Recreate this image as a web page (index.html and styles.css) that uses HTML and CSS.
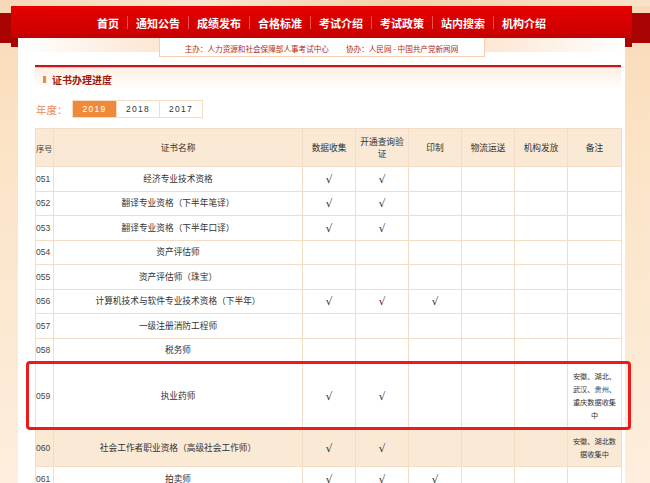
FILE: index.html
```html
<!DOCTYPE html>
<html lang="zh-CN">
<head>
<meta charset="utf-8">
<title>证书办理进度</title>
<link rel="stylesheet" href="styles.css">
</head>
<body>
<div class="topstrip"></div>
<div class="navrow">
  <nav class="nav">
    <a class="nav-item">首页</a><span class="sep"></span>
    <a class="nav-item">通知公告</a><span class="sep"></span>
    <a class="nav-item">成绩发布</a><span class="sep"></span>
    <a class="nav-item">合格标准</a><span class="sep"></span>
    <a class="nav-item">考试介绍</a><span class="sep"></span>
    <a class="nav-item">考试政策</a><span class="sep"></span>
    <a class="nav-item">站内搜索</a><span class="sep"></span>
    <a class="nav-item">机构介绍</a>
  </nav>
</div>
<div class="main">
  <div class="side side-l"></div>
  <div class="panel">
    <div class="subbar">
      <div class="sponsor"><span>主办：人力资源和社会保障部人事考试中心</span><span>协办：人民网 - 中国共产党新闻网</span></div>
    </div>
    <div class="rule"></div>
    <div class="title"><span class="mark"></span>证书办理进度</div>
    <div class="years">
      <span class="ylabel">年度：</span>
      <div class="tabs">
        <span class="tab active">2019</span><span class="tab">2018</span><span class="tab">2017</span>
      </div>
    </div>
    <table class="grid">
      <colgroup>
        <col class="c-num"><col class="c-name"><col class="c-s"><col class="c-s"><col class="c-s"><col class="c-s"><col class="c-s"><col class="c-note">
      </colgroup>
      <thead>
        <tr><th class="num">序号</th><th>证书名称</th><th>数据收集</th><th>开通查询验证</th><th>印制</th><th>物流运送</th><th>机构发放</th><th>备注</th></tr>
      </thead>
      <tbody>
        <tr><td class="num">051</td><td>经济专业技术资格</td><td class="ck">√</td><td class="ck">√</td><td></td><td></td><td></td><td></td></tr>
        <tr><td class="num">052</td><td>翻译专业资格（下半年笔译）</td><td class="ck">√</td><td class="ck">√</td><td></td><td></td><td></td><td></td></tr>
        <tr><td class="num">053</td><td>翻译专业资格（下半年口译）</td><td class="ck">√</td><td class="ck">√</td><td></td><td></td><td></td><td></td></tr>
        <tr><td class="num">054</td><td>资产评估师</td><td></td><td></td><td></td><td></td><td></td><td></td></tr>
        <tr><td class="num">055</td><td>资产评估师（珠宝）</td><td></td><td></td><td></td><td></td><td></td><td></td></tr>
        <tr><td class="num">056</td><td>计算机技术与软件专业技术资格（下半年）</td><td class="ck">√</td><td class="ck">√</td><td class="ck">√</td><td></td><td></td><td></td></tr>
        <tr><td class="num">057</td><td>一级注册消防工程师</td><td></td><td></td><td></td><td></td><td></td><td></td></tr>
        <tr><td class="num">058</td><td>税务师</td><td></td><td></td><td></td><td></td><td></td><td></td></tr>
        <tr class="tall"><td class="num anchor">059<div class="hl"></div></td><td>执业药师</td><td class="ck">√</td><td class="ck">√</td><td></td><td></td><td></td><td class="note">安徽、湖北、武汉、贵州、重庆数据收集中</td></tr>
        <tr class="mid shaded"><td class="num">060</td><td>社会工作者职业资格（高级社会工作师）</td><td class="ck">√</td><td class="ck">√</td><td></td><td></td><td></td><td class="note">安徽、湖北数据收集中</td></tr>
        <tr><td class="num">061</td><td>拍卖师</td><td class="ck">√</td><td class="ck">√</td><td class="ck">√</td><td></td><td></td><td></td></tr>
      </tbody>
    </table>
  </div>
  <div class="side side-r"></div>
</div>
</body>
</html>
```

FILE: styles.css
```css
html, body {
  margin: 0;
  padding: 0;
  overflow: hidden;
}
body {
  background: linear-gradient(to bottom, #f8d9b6 0px, #fbe2c4 120px, #fdeedd 483px);
  font-family: "Noto Sans CJK SC", "Liberation Sans", sans-serif;
  color: #333;
}
.topstrip {
  height: 6px;
  background: linear-gradient(to right, #f6d8b6, #fae6cf 30%, #f4d2ad 60%, #f9e2c7);
}
.navrow {
  height: 32px;
  padding: 0 18px 0 11px;
  background: linear-gradient(to bottom, transparent 7px, #a80404 7px);
}
.nav {
  height: 32px;
  display: flex;
  align-items: center;
  justify-content: center;
  background: linear-gradient(to bottom, #e70000, #d20000 70%, #c40000);
}
.nav-item {
  color: #fff;
  font-size: 11px;
  font-weight: bold;
  line-height: 14px;
  margin-top: 1px;
}
.sep {
  width: 1px;
  height: 13px;
  margin: 0 8px;
  background: #f0504a;
}
.main {
  display: flex;
  align-items: flex-start;
}
.side {
  height: 460px;
}
.side-l {
  width: 18px;
  background: linear-gradient(to bottom, #a80404 0, #a80404 5px, transparent 5px), linear-gradient(to right, transparent 11px, #a80404 11px) no-repeat 0 0 / 18px 9px;
}
.side-r {
  width: 25px;
  background: linear-gradient(to bottom, #a80404 0, #a80404 5px, transparent 5px), linear-gradient(to right, #a80404 7px, transparent 7px) no-repeat 0 0 / 25px 9px;
}
.panel {
  width: 607px;
  background: #fff;
  box-sizing: border-box;
  padding: 0 4px 0 17px;
  min-height: 460px;
}
.subbar {
  height: 27px;
  margin: 0 -4px 0 -17px;
  background: linear-gradient(to right, #fff 0%, #fde9d8 20%, #fcdcc4 50%, #fde9d8 80%, #fff 100%) no-repeat 0 0 / 100% 14px;
}
.sponsor {
  width: 326px;
  height: 19px;
  margin: 0 auto;
  box-sizing: border-box;
  background: #fff;
  border: 1px solid #f8cdb0;
  border-top: none;
  display: flex;
  justify-content: center;
  align-items: flex-end;
  gap: 17px;
  padding-bottom: 2px;
  font-size: 7.6px;
  line-height: 10px;
  color: #b42a22;
}
.rule {
  height: 2px;
  background: #c8151b;
  box-shadow: 0 1px 0 #f4b9ae;
}
.title {
  height: 22px;
  display: flex;
  align-items: center;
  font-size: 10px;
  font-weight: bold;
  color: #9e1710;
  background: linear-gradient(to bottom, #fdefe3, #fff);
  margin-top: 1px;
}
.mark {
  width: 3px;
  height: 7px;
  background: #f08a2c;
  margin: 0 6px 0 8px;
}
.years {
  display: flex;
  align-items: center;
  margin-top: 10px;
  height: 18px;
}
.ylabel {
  width: 36px;
  padding-left: 1px;
  font-size: 10.5px;
  color: #ec8c52;
}
.tabs {
  display: flex;
  border: 1px solid #f7dcc4;
}
.tab {
  width: 43px;
  height: 16px;
  line-height: 16px;
  text-align: center;
  font-family: "Liberation Sans", sans-serif;
  font-size: 8.5px;
  letter-spacing: 1.3px;
  color: #333;
  border-left: 1px solid #f7dcc4;
  box-sizing: border-box;
}
.tab:first-child {
  border-left: none;
}
.tab.active {
  background: #ef8a3b;
  color: #fff;
}
.grid {
  margin-top: 10px;
  width: 586px;
  table-layout: fixed;
  border-collapse: collapse;
  font-size: 8.7px;
  color: #333;
}
.c-num { width: 18px; }
.c-name { width: 249px; }
.c-s { width: 53px; }
.c-note { width: 54px; }
.grid th, .grid td {
  border: 1px solid #f5dcc6;
  padding: 0 3px;
  text-align: center;
  font-weight: normal;
  line-height: 12px;
}
.grid th {
  height: 37px;
  background: #f9e9d5;
}
.grid td {
  height: 23.5px;
}
.grid .num {
  text-align: left;
  padding: 0;
  white-space: nowrap;
  overflow: visible;
  font-family: "Liberation Sans", sans-serif;
  font-size: 8.5px;
  color: #444;
}
.grid th.num {
  font-family: "Noto Sans CJK SC", sans-serif;
  font-size: 8.4px;
  letter-spacing: -0.3px;
}
.grid td.ck {
  font-family: "DejaVu Sans", sans-serif;
  font-size: 10.5px;
  color: #1f2535;
}
.grid tr.tall td {
  height: 65px;
}
.grid tr.mid td {
  height: 37px;
}
.grid tr.shaded td {
  background: #f9e9d5;
}
.grid td.note {
  font-size: 7.2px;
  line-height: 13px;
  padding: 0 4px;
}
.anchor {
  position: relative;
}
.hl {
  position: absolute;
  left: -10px;
  top: -2px;
  width: 605px;
  height: 69px;
  box-sizing: border-box;
  border: 3px solid #ec1a1a;
  border-radius: 4px;
}
```
